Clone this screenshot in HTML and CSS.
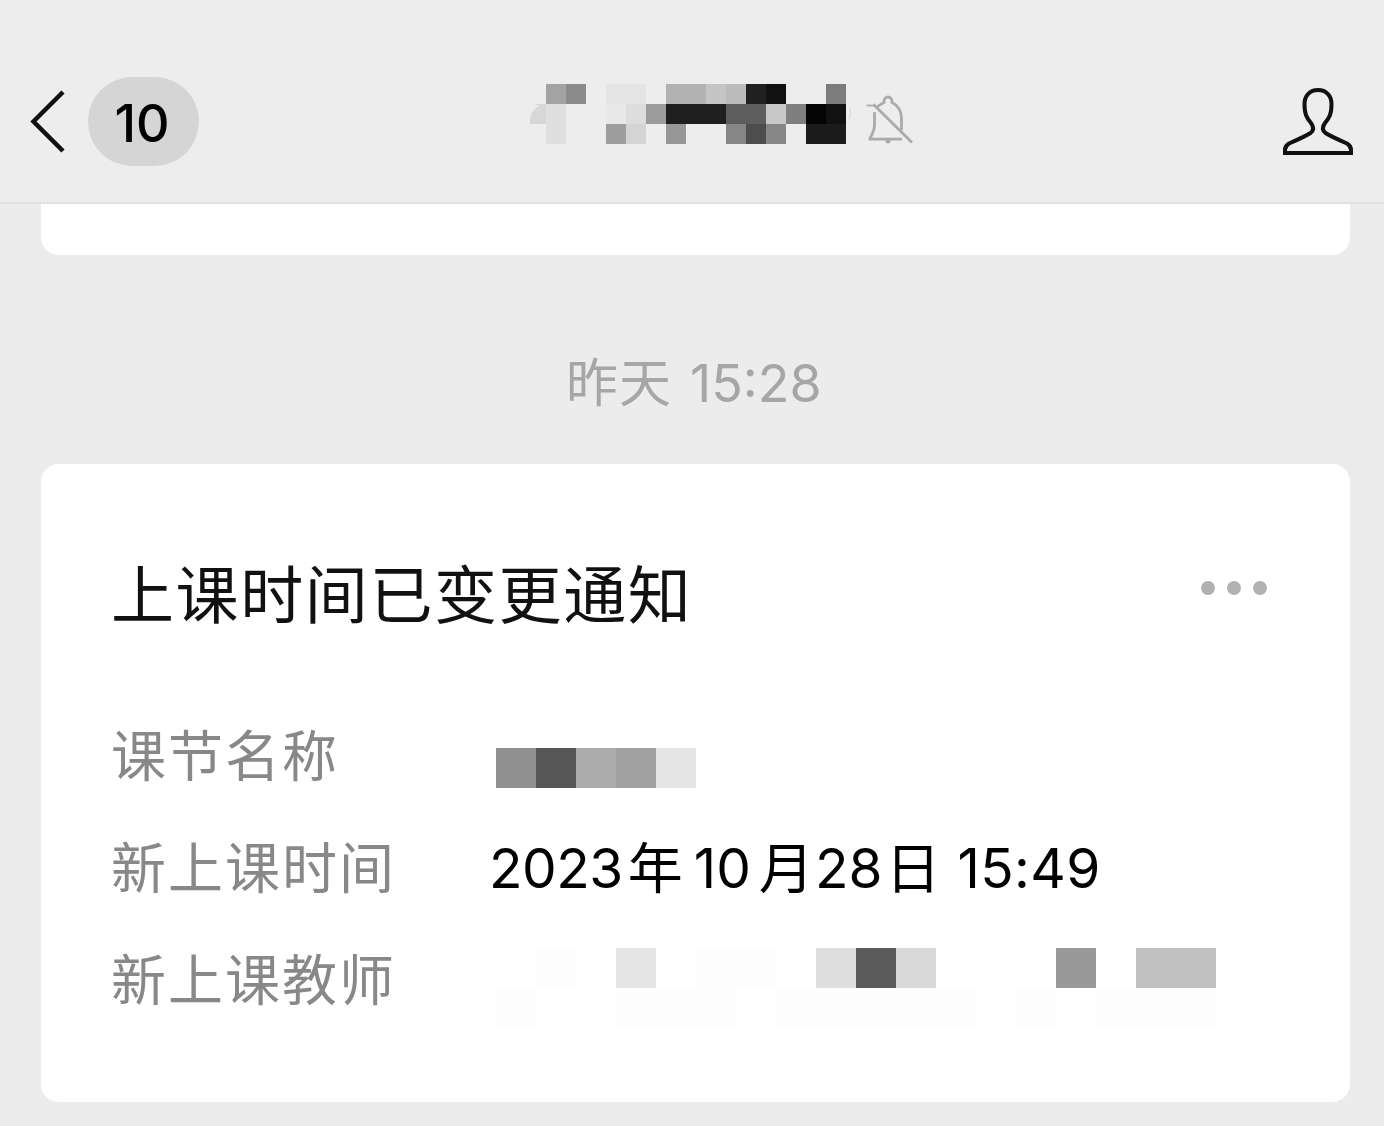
FILE: index.html
```html
<!DOCTYPE html>
<html lang="zh-CN">
<head>
<meta charset="utf-8">
<title>上课时间已变更通知</title>
<link rel="stylesheet" href="styles.css">
</head>
<body>
<header class="navbar">
  <div class="nav-back">
    <svg class="icon-back" width="36" height="64" viewBox="0 0 36 64"><path d="M33 2 3.500 31.500 33 61"/></svg>
    <span class="unread">10</span>
  </div>
  <div class="nav-title">
    <svg class="mosaic-name" width="324" height="60" viewBox="0 0 324 60" shape-rendering="crispEdges">
      <path d="M0 40Q-1 27 9 22L4 20H16V40Z" fill="#d7d7d7" shape-rendering="auto"/>
      <path d="M16 0h20v20H16z" fill="#a3a3a3"/><path d="M36 0h20v20H36z" fill="#8b8b8b"/>
      <path d="M76 0h40v20H76z" fill="#e4e4e4"/><path d="M136 0h40v20h-40z" fill="#b2b2b2"/>
      <path d="M176 0h20v20h-20z" fill="#c5c5c5"/><path d="M196 0h20v20h-20z" fill="#bbb"/>
      <path d="M216 0h20v20h-20z" fill="#202020"/><path d="M236 0h20v20h-20z" fill="#111"/>
      <path d="M296 0h20v20h-20z" fill="#7c7c7c"/>
      <path d="M16 20h20v40H16z" fill="#dfdfdf"/><path d="M76 20h20v20H76z" fill="#e8e8e8"/>
      <path d="M96 20h20v20H96z" fill="#ddd"/><path d="M116 20h20v20h-20z" fill="#9b9b9b"/>
      <path d="M136 20h60v20h-60z" fill="#1e1e1e"/><path d="M196 20h40v20h-40z" fill="#5e5e5e"/>
      <path d="M236 20h20v20h-20z" fill="#c8c8c8"/><path d="M256 20h20v20h-20z" fill="#7f7f7f"/>
      <path d="M276 20h20v20h-20z" fill="#050505"/><path d="M296 20h20v20h-20z" fill="#121212"/>
      <path d="M76 40h20v20H76z" fill="#9e9e9e"/><path d="M96 40h20v20H96z" fill="#d4d4d4"/>
      <path d="M136 40h20v20h-20z" fill="#979797"/><path d="M196 40h20v20h-20z" fill="#868686"/>
      <path d="M216 40h20v20h-20z" fill="#4d4d4d"/><path d="M236 40h20v20h-20z" fill="#878787"/>
      <path d="M276 40h40v20h-40z" fill="#1c1c1c"/>
      <path d="M320 24q2 6-1 11" fill="none" stroke="#d4d4d4" shape-rendering="auto"/>
    </svg>
    <svg class="icon-mute" width="50" height="52" viewBox="0 0 50 52"><path class="stub" d="M1.500 13.500H9"/><path d="M8.500 12.500L47 50.500M12 15Q15 12.500 19 10.500V9a4 4 0 0 1 8 0V10.500Q36.500 15 36.500 27V38M9.500 20V33Q9.500 38 5 46.500V47.200H37"/><circle cx="23" cy="49" r="2.500"/></svg>
  </div>
  <svg class="icon-person" width="72" height="70" viewBox="0 0 72 70"><path d="M36 3C28 3 22.500 8.500 22.500 17C22.500 27 24.500 30.500 29 36Q33.500 42 28.500 46Q24 49 7 56.500Q3 59 3 63V66H69V63Q69 59 65 56.500Q48 49 43.500 46Q38.500 42 43 36C47.500 30.500 49.500 27 49.500 17C49.500 8.500 44 3 36 3Z"/></svg>
</header>
<main class="chat">
  <section class="card card-previous"></section>
  <time class="timestamp"><span class="cjk">昨天</span><span class="clock">15:28</span></time>
  <article class="card notice">
    <div class="notice-head">
      <h1>上课时间已变更通知</h1>
      <div class="more"><i></i><i></i><i></i></div>
    </div>
    <dl class="fields">
      <div class="row">
        <dt>课节名称</dt>
        <dd><svg class="mosaic" width="720" height="80" viewBox="0 0 720 80" shape-rendering="crispEdges">
          <path d="M0 0h40v40H0zM120 0h40v40h-40zM240 40h80v40h-80z" fill="#fefefe"/>
          <path d="M0 40h40v40H0z" fill="#919191"/><path d="M40 40h40v40H40z" fill="#575757"/>
          <path d="M80 40h40v40H80z" fill="#acacac"/><path d="M120 40h40v40h-40z" fill="#a1a1a1"/>
          <path d="M160 40h40v40h-40z" fill="#e5e5e5"/>
        </svg></dd>
      </div>
      <div class="row">
        <dt>新上课时间</dt>
        <dd class="date"><span class="year">2023</span><span class="unit-year">年</span><span class="month">10</span><span class="unit-month">月</span><span class="day">28</span><span class="unit-day">日</span><span class="hour">15:49</span></dd>
      </div>
      <div class="row">
        <dt>新上课教师</dt>
        <dd><svg class="mosaic mosaic-teacher" width="720" height="80" viewBox="0 0 720 80" shape-rendering="crispEdges">
          <path d="M40 0h40v40H40zM200 0h80v40h-80zM0 40h40v40H0zM120 40h120v40H120zM280 40h200v40H280zM520 40h40v40h-40zM600 40h120v40H600z" fill="#fdfdfd"/>
          <path d="M120 0h40v40h-40z" fill="#e5e5e5"/><path d="M320 0h40v40h-40z" fill="#dfdfdf"/>
          <path d="M360 0h40v40h-40z" fill="#5b5b5b"/><path d="M400 0h40v40h-40z" fill="#d9d9d9"/>
          <path d="M560 0h40v40h-40z" fill="#999"/><path d="M640 0h80v40h-80z" fill="#c1c1c1"/>
        </svg></dd>
      </div>
    </dl>
  </article>
</main>
</body>
</html>
```
FILE: styles.css
```css
* { box-sizing: border-box; }
body {
  margin: 0;
  width: 1384px;
  height: 1126px;
  overflow: hidden;
  background: #ececec;
  color: #111;
  font-family: Inter, "Noto Sans CJK SC", sans-serif;
}
svg { display: block; overflow: visible; flex: none; }
.navbar {
  height: 204px;
  display: grid;
  grid-template-columns: 530px 1fr 102px;
  align-items: start;
  background: #ededed;
  border-bottom: 2px solid #e2e2e2;
}
.nav-back { display: flex; align-items: center; padding: 77px 0 0 30px; gap: 22px; }
.icon-back { fill: none; stroke: #111; stroke-width: 4.500; }
.unread {
  width: 111px;
  height: 89px;
  padding-right: 3px;
  border-radius: 45px;
  background: #d5d5d5;
  color: #000;
  font-size: 52px;
  font-weight: 450;
  line-height: 93px;
  text-align: center;
}
.nav-title { display: flex; padding-top: 84px; gap: 11px; }
.icon-mute { margin-top: 8px; fill: none; stroke: #ababab; stroke-width: 2.800; }
.icon-mute .stub { stroke-width: 1.800; }
.icon-mute circle { fill: #ababab; stroke: none; }
.icon-person { margin-top: 87px; fill: none; stroke: #111; stroke-width: 4; }
.chat { padding: 0 34px 0 41px; }
.card { background: #fff; border-radius: 18px; }
.card-previous { height: 51px; border-radius: 0 0 18px 18px; }
.timestamp {
  display: flex;
  align-items: center;
  height: 209px;
  padding: 48px 0 0 525px;
  color: #a6a6a6;
  font-size: 52px;
  line-height: 60px;
}
.timestamp .cjk { letter-spacing: 1px; }
.timestamp .clock { margin-left: 18px; }
.notice { height: 638px; padding: 89px 0 0 70px; }
.notice-head { display: flex; justify-content: space-between; height: 147px; }
h1 { margin: 0; font-size: 63px; line-height: 84px; font-weight: 400; letter-spacing: 1.600px; }
.more { display: flex; gap: 12px; padding: 28px 83px 0 0; }
.more i { width: 14px; height: 14px; border-radius: 50%; background: #b2b2b2; }
.fields { margin: 0; }
.row { display: grid; grid-template-columns: 378px 1fr; height: 112px; line-height: 112px; font-size: 55px; }
dt { color: #888; letter-spacing: 2px; }
dd { margin: 0; }
.mosaic { margin: 8px 0 0 7px; }
.mosaic-teacher { margin-top: 24px; }
.date { display: flex; color: #000; }
.year { letter-spacing: -0.500px; }
.unit-year { margin-left: 5px; }
.month { margin-left: 11px; }
.unit-month { margin-left: 8px; }
.day { margin-left: 1px; }
.unit-day { margin-left: 3px; }
.hour { margin-left: 17px; letter-spacing: 0.400px; }
```
